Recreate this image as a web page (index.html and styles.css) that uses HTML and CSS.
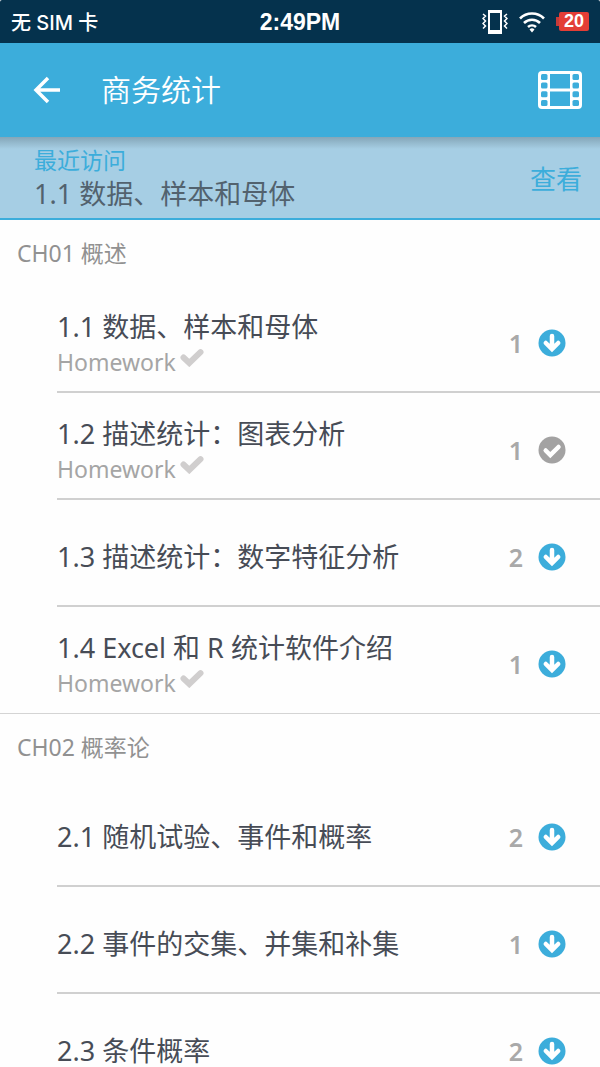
FILE: index.html
```html
<!DOCTYPE html>
<html lang="zh-CN">
<head>
    <meta charset="UTF-8">
    <meta name="viewport" content="width=device-width, initial-scale=1.0">
    <title>商务统计</title>
    <link rel="stylesheet" href="styles.css">
</head>
<body>
    <!-- icons used more than once -->
    <svg class="sprite" aria-hidden="true">
        <symbol id="download" viewBox="0 0 28 28">
            <circle cx="14" cy="14" r="13.5" fill="#3caddb"/>
            <path d="M14 7V19M7.800 14L14 20L20.200 14" fill="none" stroke="#fff" stroke-width="4.500" stroke-linecap="round"/>
        </symbol>
        <symbol id="done" viewBox="0 0 28 28">
            <circle cx="14" cy="14" r="13.5" fill="#a3a2a2"/>
            <path d="M7.700 14.500L12.300 19L20.500 11" fill="none" stroke="#fff" stroke-width="4.500" stroke-linecap="round"/>
        </symbol>
        <symbol id="tick" viewBox="0 0 24 18">
            <path d="M3.500 8.500L9.300 14L20.500 3.200" fill="none" stroke="#d0cece" stroke-width="6" stroke-linecap="round"/>
        </symbol>
    </svg>

    <div class="app">
        <div class="status">
            <span class="carrier">无 SIM 卡</span>
            <span class="time">2:49PM</span>
            <div class="status-icons">
                <svg class="vibrate" viewBox="0 0 26 26">
                    <path fill="#fff" fill-rule="evenodd" d="M6 1h14v24H6zM8 4v17h10V4z"/>
                    <path d="M1 5l2.500 2L1 9.500l2.500 2.500L1 14.500 3.500 17 1 19.500M25 5l-2.500 2L25 9.500l-2.500 2.500 2.500 2.500-2.500 2.500 2.500 2.500" fill="none" stroke="#fff" stroke-width="1.500"/>
                </svg>
                <svg class="wifi" viewBox="0 0 26 22">
                    <path d="M1 7.500a17 17 0 0 1 24 0M5 12a11.500 11.500 0 0 1 16 0M9 16a6 6 0 0 1 8 0" fill="none" stroke="#fff" stroke-width="2.600"/>
                    <path d="M10.500 18.500a3.500 3.500 0 0 1 5 0L13 21.500z" fill="#fff"/>
                </svg>
                <div class="battery"><i></i><span>20</span></div>
            </div>
        </div>

        <header class="header">
            <button class="icon-btn" aria-label="返回">
                <svg class="back" viewBox="0 0 28 28"><path d="M27 14H3M15 2L3 14l12 12" fill="none" stroke="#fff" stroke-width="3.500"/></svg>
            </button>
            <h1>商务统计</h1>
            <button class="icon-btn" aria-label="视频">
                <svg class="film" viewBox="0 0 44 38">
                    <path fill="#fff" fill-rule="evenodd" d="M4 0h36a4 4 0 0 1 4 4v30a4 4 0 0 1-4 4H4a4 4 0 0 1-4-4V4a4 4 0 0 1 4-4zM12 3v14.500h20V3zM12 20.500V35h20V20.500z"/>
                    <g fill="#3caddb">
                        <rect x="3" y="3" width="6.500" height="6" rx="1.500"/>
                        <rect x="3" y="11.600" width="6.500" height="6" rx="1.500"/>
                        <rect x="3" y="20.300" width="6.500" height="6" rx="1.500"/>
                        <rect x="3" y="29" width="6.500" height="6" rx="1.500"/>
                        <rect x="34.500" y="3" width="6.500" height="6" rx="1.500"/>
                        <rect x="34.500" y="11.600" width="6.500" height="6" rx="1.500"/>
                        <rect x="34.500" y="20.300" width="6.500" height="6" rx="1.500"/>
                        <rect x="34.500" y="29" width="6.500" height="6" rx="1.500"/>
                    </g>
                </svg>
            </button>
        </header>

        <section class="recent">
            <div class="recent-text">
                <h2>最近访问</h2>
                <p>1.1 数据、样本和母体</p>
            </div>
            <a class="view" href="#lesson-1-1">查看</a>
        </section>

        <main class="chapters">
            <section class="chapter">
                <h2>CH01 概述</h2>
                <ul>
                    <li id="lesson-1-1">
                        <div class="lesson">
                            <h3>1.1 数据、样本和母体</h3>
                            <p>Homework<svg class="tick"><use href="#tick"/></svg></p>
                        </div>
                        <span class="count">1</span>
                        <button class="icon-btn" aria-label="下载"><svg class="state"><use href="#download"/></svg></button>
                    </li>
                    <li>
                        <div class="lesson">
                            <h3>1.2 描述统计：图表分析</h3>
                            <p>Homework<svg class="tick"><use href="#tick"/></svg></p>
                        </div>
                        <span class="count">1</span>
                        <button class="icon-btn" aria-label="已下载"><svg class="state"><use href="#done"/></svg></button>
                    </li>
                    <li>
                        <div class="lesson">
                            <h3>1.3 描述统计：数字特征分析</h3>
                        </div>
                        <span class="count">2</span>
                        <button class="icon-btn" aria-label="下载"><svg class="state"><use href="#download"/></svg></button>
                    </li>
                    <li>
                        <div class="lesson">
                            <h3>1.4 Excel 和 R 统计软件介绍</h3>
                            <p>Homework<svg class="tick"><use href="#tick"/></svg></p>
                        </div>
                        <span class="count">1</span>
                        <button class="icon-btn" aria-label="下载"><svg class="state"><use href="#download"/></svg></button>
                    </li>
                </ul>
            </section>

            <section class="chapter">
                <h2>CH02 概率论</h2>
                <ul>
                    <li>
                        <div class="lesson">
                            <h3>2.1 随机试验、事件和概率</h3>
                        </div>
                        <span class="count">2</span>
                        <button class="icon-btn" aria-label="下载"><svg class="state"><use href="#download"/></svg></button>
                    </li>
                    <li>
                        <div class="lesson">
                            <h3>2.2 事件的交集、并集和补集</h3>
                        </div>
                        <span class="count">1</span>
                        <button class="icon-btn" aria-label="下载"><svg class="state"><use href="#download"/></svg></button>
                    </li>
                    <li>
                        <div class="lesson">
                            <h3>2.3 条件概率</h3>
                        </div>
                        <span class="count">2</span>
                        <button class="icon-btn" aria-label="下载"><svg class="state"><use href="#download"/></svg></button>
                    </li>
                </ul>
            </section>
        </main>
    </div>
</body>
</html>
```

FILE: styles.css
```css
*{
    margin: 0px;
    padding: 0px;
    box-sizing: border-box;
}
body{
    font-family: "Noto Sans", "Noto Sans CJK SC", sans-serif;
    background-color: #fefefe;
}
h1, h2, h3{
    font-weight: 400;
}
ul{
    list-style: none;
}
svg{
    display: block;
}
.sprite{
    display: none;
}
.app{
    display: flex;
    flex-direction: column;
    height: 100vh;
}
.icon-btn{
    border: 0;
    background: none;
    cursor: pointer;
}

/* status bar */
.status{
    display: grid;
    grid-template-columns: 1fr auto 1fr;
    align-items: center;
    flex: none;
    height: 43px;
    padding: 0 11px;
    border-radius: 2px 2px 0 0;
    background-color: #05324d;
    color: white;
    font-family: "Liberation Sans", "Noto Sans CJK SC", sans-serif;
    font-size: 23px;
    font-weight: 700;
}
.carrier{
    font-family: Inter, "Noto Sans CJK SC", sans-serif;
    font-size: 20px;
    font-weight: 500;
}
.time{
    padding-top: 2px;
}
.status-icons{
    display: flex;
    align-items: center;
    justify-content: flex-end;
    gap: 11px;
}
.vibrate{
    width: 26px;
    height: 26px;
}
.wifi{
    width: 26px;
    height: 22px;
}
.battery{
    display: flex;
    align-items: center;
}
.battery i{
    width: 3px;
    height: 9px;
    background-color: #c53a39;
}
.battery span{
    padding: 0 5px;
    border-radius: 2px;
    background-color: #e33e36;
    font-size: 18px;
    line-height: 19px;
}

/* title bar */
.header{
    display: flex;
    align-items: center;
    flex: none;
    height: 94px;
    padding: 0 18px 0 33px;
    background-color: #3caddb;
    color: white;
}
.header h1{
    flex: 1;
    margin-left: 40px;
    font-size: 30px;
    font-weight: 350;
    line-height: 40px;
}
.back{
    width: 28px;
    height: 28px;
}
.film{
    width: 44px;
    height: 38px;
}

/* last visited lesson */
.recent{
    display: flex;
    align-items: center;
    justify-content: space-between;
    flex: none;
    height: 83px;
    padding: 0 18px 0 34px;
    border-bottom: 2px solid #3caddb;
    background: linear-gradient(#84a6b8, #a6cee4 12px);
}
.recent h2{
    color: #3caddb;
    font-size: 23px;
    line-height: 32px;
}
.recent p{
    color: #52626e;
    font-size: 27px;
    line-height: 36px;
}
.view{
    color: #3caddb;
    font-size: 26px;
    text-decoration: none;
}

/* lessons */
.chapters{
    flex: 1;
    overflow-y: auto;
    scrollbar-width: none;
}
.chapter h2{
    padding: 16px 17px;
    color: #919191;
    font-size: 23px;
    line-height: 34px;
}
.chapter + .chapter{
    border-top: 1px solid #d4d4d4;
}
.chapter li{
    display: flex;
    align-items: center;
    height: 107px;
    margin-left: 57px;
    padding: 8px 34px 0 0;
    border-bottom: 2px solid #d0d0d0;
}
.chapter li:last-child{
    height: 106px;
    border-bottom: 0;
}
.lesson{
    flex: 1;
}
.lesson h3{
    color: #474c56;
    font-size: 27px;
    line-height: 38px;
}
.lesson p{
    display: flex;
    color: #a5a5a5;
    font-size: 23px;
    line-height: 32px;
}
.tick{
    width: 24px;
    height: 18px;
    margin: 3px 0 0 4px;
}
.count{
    margin-right: 15px;
    color: #a9a9a9;
    font-size: 25px;
    font-weight: 600;
}
.state{
    width: 28px;
    height: 28px;
}
```
